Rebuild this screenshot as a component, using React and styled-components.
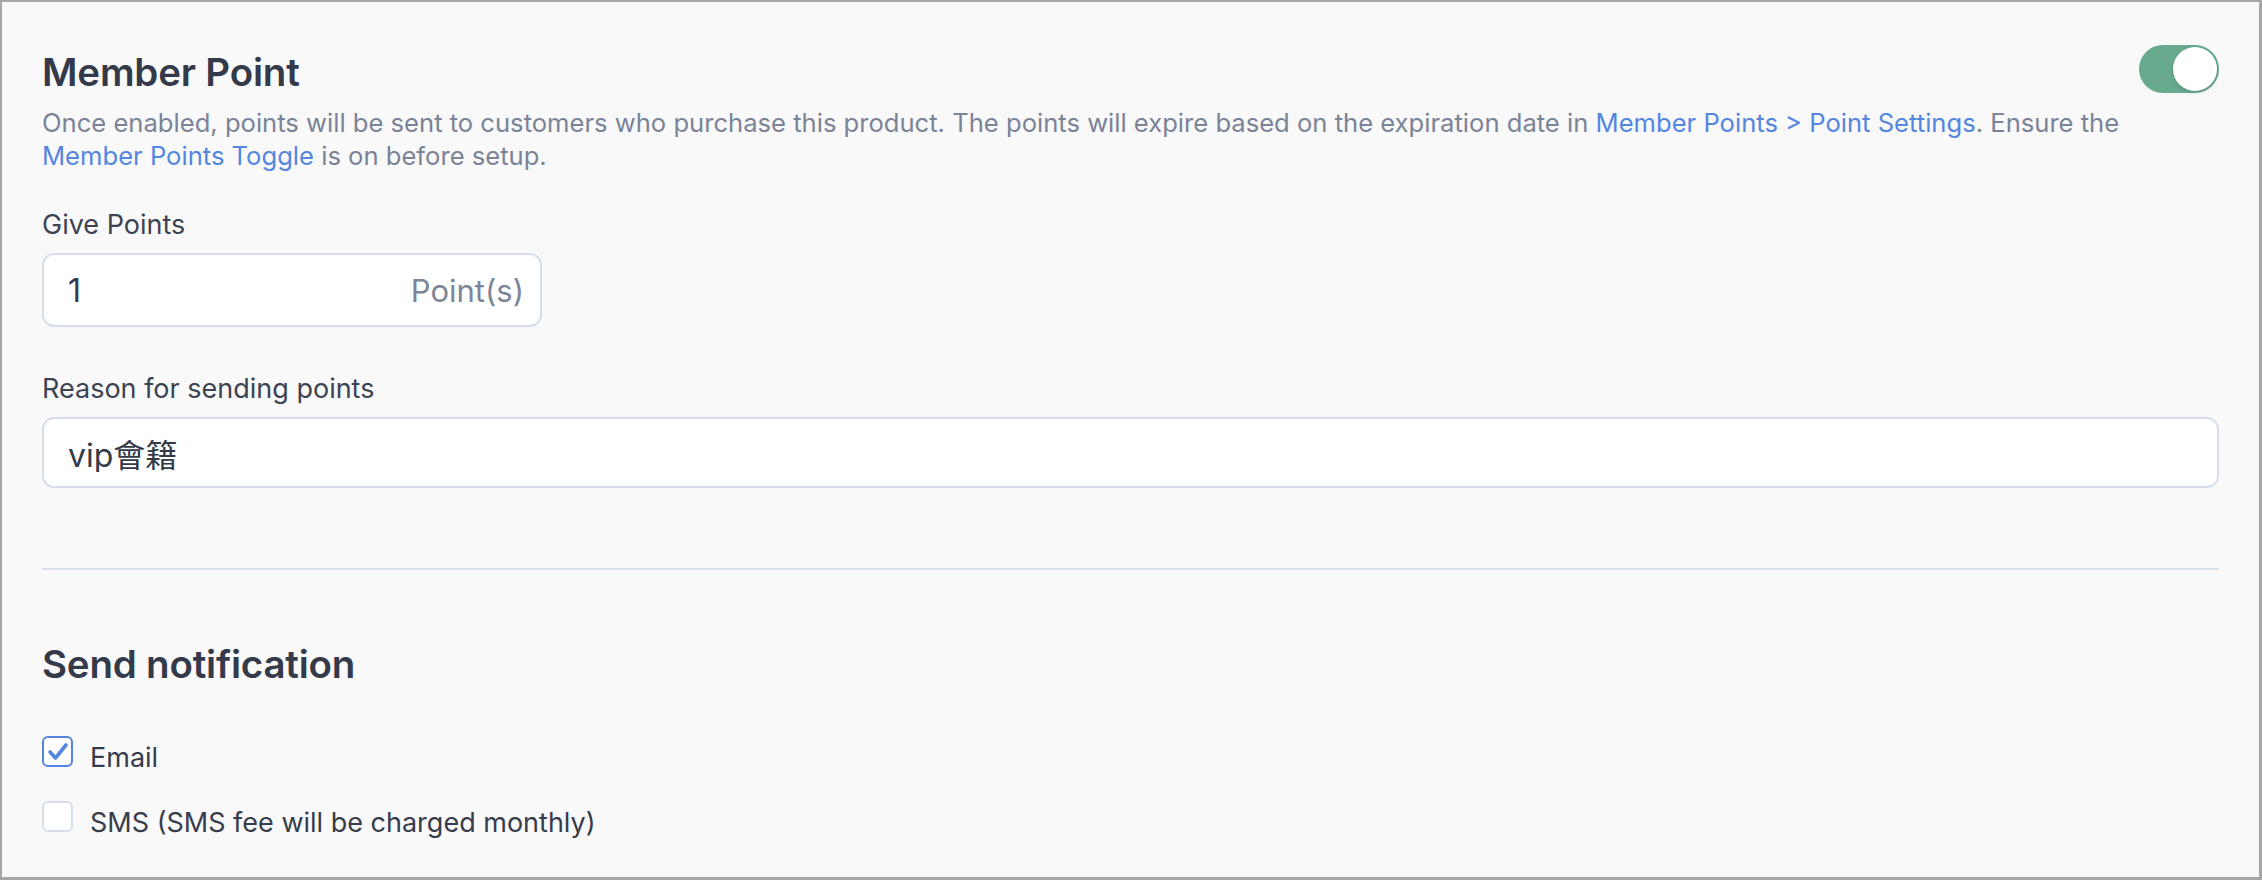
import React from "react";
import styled, { createGlobalStyle } from "styled-components";

const GlobalStyle = createGlobalStyle`
  html, body {
    margin: 0;
    padding: 0;
  }
  body {
    font-family: Inter, "Noto Sans", "Noto Sans CJK TC", sans-serif;
    background: #f9f9f9;
  }
  * {
    box-sizing: border-box;
  }
`;

const Frame = styled.div`
  height: 100vh;
  background: #f9f9f9;
  border-style: solid;
  border-color: #a6a6a6;
  border-width: 2px 3px 3px 2px;
  padding: 42px 40px 0 40px;
  display: flex;
  flex-direction: column;
`;

const Header = styled.div`
  display: flex;
  justify-content: space-between;
  align-items: flex-start;
`;

const Title = styled.h2`
  margin: 0;
  font-size: 38.5px;
  line-height: 56px;
  font-weight: 600;
  color: #343a4a;
  letter-spacing: -0.2px;
`;

const SectionTitle = styled(Title)`
  line-height: 48px;
  margin-top: 70px;
`;

const Toggle = styled.button`
  width: 80px;
  height: 48px;
  margin-top: 1px;
  padding: 2px;
  border: none;
  border-radius: 24px;
  background: ${p => (p.$on ? "#67aa8d" : "#d6dee7")};
  display: flex;
  justify-content: ${p => (p.$on ? "flex-end" : "flex-start")};
  cursor: pointer;
`;

const Knob = styled.span`
  width: 44px;
  height: 44px;
  border-radius: 50%;
  background: #fff;
  box-shadow: 0 2px 4px rgba(0, 0, 0, 0.12);
`;

const Description = styled.p`
  margin: 6px 0 0;
  font-size: 25.6px;
  line-height: 33px;
  color: #7a8397;
`;

const Link = styled.a`
  color: #5486e0;
  text-decoration: none;
`;

const Field = styled.div`
  display: flex;
  flex-direction: column;
  margin-top: ${p => p.$gap}px;
`;

const Label = styled.label`
  font-size: 27px;
  line-height: 36px;
  color: #3c4352;
  margin-bottom: 10px;
`;

const InputBox = styled.div`
  display: flex;
  align-items: center;
  width: ${p => p.$width || "100%"};
  height: ${p => p.$height}px;
  padding: 0 16px 0 24px;
  background: #fff;
  border: 2px solid #d6dfe9;
  border-radius: 12px;
`;

const Input = styled.input`
  flex: 1;
  min-width: 0;
  border: none;
  outline: none;
  background: transparent;
  padding: 0;
  font-family: Inter, "Noto Sans CJK TC", sans-serif;
  font-size: 32px;
  color: #343a48;
`;

const Suffix = styled.span`
  font-size: 31px;
  color: #7d8697;
`;

const Divider = styled.hr`
  margin: 80px 0 0;
  border: none;
  height: 2px;
  background: #d6dee7;
`;

const Options = styled.div`
  display: flex;
  flex-direction: column;
  gap: 25px;
  margin-top: 50px;
`;

const Option = styled.label`
  display: flex;
  align-items: flex-start;
  gap: 17px;
  font-size: 27px;
  line-height: 40px;
  color: #363c4b;
  cursor: pointer;
`;

const Box = styled.span`
  width: 31px;
  height: 31px;
  margin-top: -2px;
  flex: none;
  display: flex;
  align-items: center;
  justify-content: center;
  background: #fff;
  border: 2px solid ${p => (p.$checked ? "#5486e0" : "#d6dfe9")};
  border-radius: 6px;
`;

const Checkbox = ({ checked, children }) => (
  <Option>
    <Box $checked={checked}>
      {checked && (
        <svg width="22" height="20" viewBox="0 0 22 20" fill="none">
          <path
            d="M3 10 L8.5 16 L19 3"
            stroke="#5486e0"
            strokeWidth="3.6"
            strokeLinecap="round"
            strokeLinejoin="round"
          />
        </svg>
      )}
    </Box>
    <span>{children}</span>
  </Option>
);

const App = () => {
  return (
    <>
      <GlobalStyle />
      <Frame>
        <Header>
          <Title>Member Point</Title>
          <Toggle $on aria-label="Member point">
            <Knob />
          </Toggle>
        </Header>
        <Description>
          Once enabled, points will be sent to customers who purchase this
          product. The points will expire based on the expiration date in{" "}
          <Link href="#">Member Points &gt; Point Settings</Link>. Ensure the{" "}
          <Link href="#">Member Points Toggle</Link> is on before setup.
        </Description>

        <Field $gap={35}>
          <Label>Give Points</Label>
          <InputBox $width="500px" $height={74}>
            <Input defaultValue="1" />
            <Suffix>Point(s)</Suffix>
          </InputBox>
        </Field>

        <Field $gap={44}>
          <Label>Reason for sending points</Label>
          <InputBox $height={71}>
            <Input defaultValue="vip會籍" />
          </InputBox>
        </Field>

        <Divider />

        <SectionTitle>Send notification</SectionTitle>
        <Options>
          <Checkbox checked>Email</Checkbox>
          <Checkbox>SMS (SMS fee will be charged monthly)</Checkbox>
        </Options>
      </Frame>
    </>
  );
};

export default App;
